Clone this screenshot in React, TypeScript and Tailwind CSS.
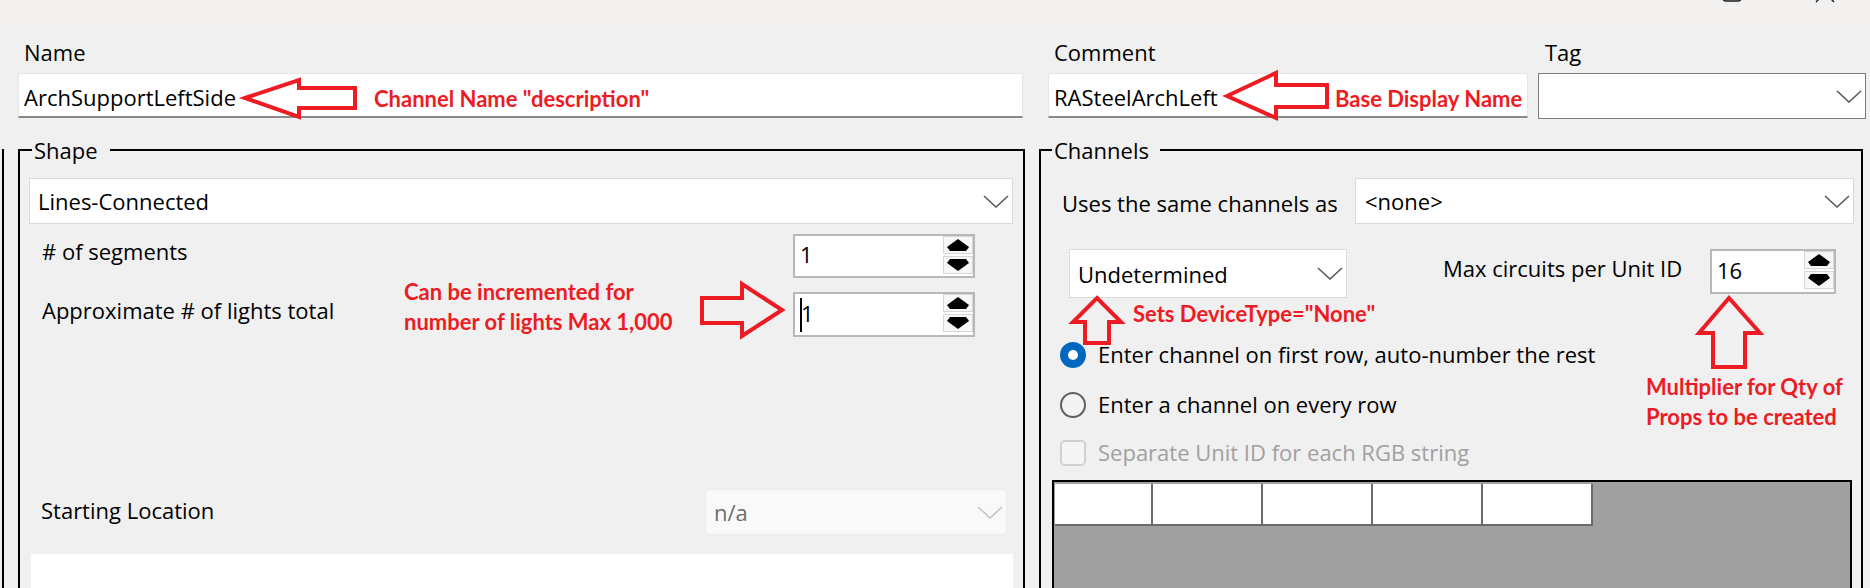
import React from "react";

type Cls = Readonly<{ className?: string }>;

function Chevron({ className }: Cls) {
  return (
    <svg viewBox="0 0 26 13" className={className} fill="none" stroke="currentColor" strokeWidth={1.6}>
      <path d="M1 1 L13 12 L25 1" />
    </svg>
  );
}

function SpinButtons() {
  return (
    <div className="flex flex-col gap-[2px]">
      <div className="w-[30px] h-[18px] border border-[#d6d6d6] bg-[#f7f7f7] flex items-center justify-center">
        <svg width="22" height="12" viewBox="0 0 22 12">
          <polygon points="11,0 22,8 19,12 3,12 0,8" fill="#000" />
        </svg>
      </div>
      <div className="w-[30px] h-[18px] border border-[#d6d6d6] bg-[#f7f7f7] flex items-center justify-center">
        <svg width="22" height="12" viewBox="0 0 22 12">
          <polygon points="3,0 19,0 22,4 11,12 0,4" fill="#000" />
        </svg>
      </div>
    </div>
  );
}

function Spinbox({ value, className, caret }: Cls & { value: string; caret?: boolean }) {
  return (
    <div className={`flex bg-white border-2 border-[#b8b8b8] ${className ?? ""}`}>
      <div className="flex-1 flex items-center pl-[5px]">
        {caret && <span className="w-[2px] h-[34px] bg-black -mr-[1px]" />}
        <span className="pb-[3px]">{value}</span>
      </div>
      <SpinButtons />
    </div>
  );
}

function Select({ value, className, disabled }: Cls & { value: string; disabled?: boolean }) {
  return (
    <div
      className={`flex items-center justify-between pr-[3px] ${
        disabled ? "bg-[#f9f9f9] border border-[#ececec] text-[#6d6d6d]" : "bg-white border border-[#dadada]"
      } ${className ?? ""}`}
    >
      <span className="pt-[1px]">{value}</span>
      <Chevron className={`w-[26px] h-[13px] ${disabled ? "text-[#c6c6c6]" : "text-[#5a5a5a]"}`} />
    </div>
  );
}

function Radio({ checked }: Readonly<{ checked?: boolean }>) {
  return checked ? (
    <span className="w-[26px] h-[26px] rounded-full bg-[#0067c0] flex items-center justify-center">
      <span className="w-[10px] h-[10px] rounded-full bg-white" />
    </span>
  ) : (
    <span className="w-[26px] h-[26px] rounded-full border-2 border-[#5f5f5f] bg-[#f3f3f3]" />
  );
}

const headerCells = [98, 110, 110, 110, 110];

const notes = [
  { text: 'Channel Name "description"', cls: "left-[374px] top-[88px]" },
  { text: "Base Display Name", cls: "left-[1335px] top-[88px]" },
  { text: "Can be incremented for", cls: "left-[404px] top-[281px]" },
  { text: "number of lights Max 1,000", cls: "left-[404px] top-[311px]" },
  { text: 'Sets DeviceType="None"', cls: "left-[1133px] top-[303px]" },
  { text: "Multiplier for Qty of", cls: "left-[1646px] top-[376px]" },
  { text: "Props to be created", cls: "left-[1646px] top-[406px]" },
];

const arrows = [
  "245,98 299,80 299,88 355,88 355,108 299,108 299,117",
  "1227,96 1276,73 1276,85 1327,85 1327,107 1276,107 1276,118",
  "782,310 742,284 742,298 702,298 702,323 742,323 742,336",
  "1097,298 1121,322 1109,322 1109,343 1085,343 1085,322 1073,322",
  "1729,298 1760,333 1745,333 1745,367 1713,367 1713,333 1699,333",
];

export default function App() {
  return (
    <div className="relative w-[1870px] h-[588px] overflow-hidden bg-[#f0f0f0] text-black text-[22px] font-['Open_Sans',sans-serif]">
      {/* title bar, only the bottom of the buttons is in view */}
      <div className="h-[25px] bg-[#f3f1f0] flex justify-end items-end pr-[35px] gap-[73px] overflow-hidden">
        <svg width="20" height="20" viewBox="0 0 20 20" className="mb-[22px]" fill="none" stroke="#1a1a1a" strokeWidth={1.6}>
          <rect x="1" y="1" width="18" height="17" rx="3" />
        </svg>
        <svg width="20" height="20" viewBox="0 0 20 20" className="mb-[22px]" fill="none" stroke="#1a1a1a" strokeWidth={1.4}>
          <path d="M1 1 L19 19 M19 1 L1 19" />
        </svg>
      </div>

      {/* name / comment / tag */}
      <div className="flex pl-[18px] pt-[13px]">
        <div className="w-[1005px] flex flex-col">
          <div className="h-[28px] leading-[28px] pl-[6px]">Name</div>
          <div className="mt-[7px] h-[45px] bg-white border border-[#e6e6e6] border-b-2 border-b-[#8a8a8a] flex items-center pl-[5px] pt-[4px]">
            ArchSupportLeftSide
          </div>
        </div>
        <div className="ml-[25px] w-[480px] flex flex-col">
          <div className="h-[28px] leading-[28px] pl-[6px]">Comment</div>
          <div className="mt-[7px] h-[45px] bg-white border border-[#e6e6e6] border-b-2 border-b-[#8a8a8a] flex items-center pl-[5px] pt-[4px]">
            RASteelArchLeft
          </div>
        </div>
        <div className="ml-[10px] w-[328px] flex flex-col">
          <div className="h-[28px] leading-[28px] pl-[7px]">Tag</div>
          <div className="mt-[7px] h-[46px] bg-white border border-[#7a7a7a] flex items-center justify-end pr-[3px]">
            <Chevron className="w-[26px] h-[13px] text-[#5a5a5a]" />
          </div>
        </div>
      </div>

      {/* group boxes */}
      <div className="flex mt-[17px] h-[453px]">
        <div className="ml-[2px] mt-[13px] w-[2px] bg-black" />

        <fieldset className="ml-[14px] w-[1007px] h-[480px] border-2 border-black min-w-0">
          <legend className="ml-[12px] pl-[2px] pr-[12px] leading-[28px] -mt-[2px]">Shape</legend>
          <Select value="Lines-Connected" className="mt-[14px] ml-[9px] w-[984px] h-[46px] pl-[8px]" />
          <div className="mt-[10px] flex items-start h-[44px]">
            <div className="pl-[22px] mt-[3px] leading-[28px]">
              # of segments
            </div>
            <Spinbox value="1" className="ml-auto mr-[48px] w-[182px] h-[44px]" />
          </div>
          <div className="mt-[14px] flex items-start h-[45px]">
            <div className="pl-[22px] mt-[4px] leading-[28px]">Approximate # of lights total</div>
            <Spinbox value="1" caret className="ml-auto mr-[48px] w-[182px] h-[45px]" />
          </div>
          <div className="mt-[152px] flex items-center h-[46px]">
            <div className="pl-[21px] pb-[5px] leading-[28px]">Starting Location</div>
            <Select value="n/a" disabled className="ml-auto mr-[16px] w-[302px] h-[46px] pl-[8px]" />
          </div>
          <div className="mt-[19px] ml-[11px] w-[982px] h-[80px] bg-white" />
        </fieldset>

        <fieldset className="ml-[14px] w-[824px] h-[480px] border-2 border-black min-w-0">
          <legend className="ml-[11px] pl-[2px] pr-[11px] leading-[28px]">Channels</legend>
          <div className="mt-[14px] flex items-center h-[46px]">
            <div className="pl-[21px] pt-[4px] leading-[28px]">Uses the same channels as</div>
            <Select value="<none>" className="ml-auto mr-[7px] w-[499px] h-[46px] pl-[9px]" />
          </div>
          <div className="mt-[25px] flex items-start h-[49px]">
            <Select value="Undetermined" className="ml-[28px] w-[278px] h-[49px] pl-[8px]" />
            <div className="ml-[96px] mt-[5px] leading-[28px]">Max circuits per Unit ID</div>
            <Spinbox value="16" className="ml-auto mr-[25px] w-[126px] h-[45px]" />
          </div>
          <div className="mt-[43px] h-[28px] flex items-center pl-[19px] gap-[12px]">
            <Radio checked />
            <span className="pb-[1px]">Enter channel on first row, auto-number the rest</span>
          </div>
          <div className="mt-[22px] h-[28px] flex items-center pl-[19px] gap-[12px]">
            <Radio />
            <span className="pb-[1px]">Enter a channel on every row</span>
          </div>
          <div className="mt-[20px] h-[28px] flex items-center pl-[19px] gap-[12px]">
            <span className="w-[26px] h-[26px] rounded-[5px] border-2 border-[#d0d0d0] bg-[#f5f5f5]" />
            <span className="pb-[1px] text-[#a0a0a0]">Separate Unit ID for each RGB string</span>
          </div>
          <div className="mt-[13px] ml-[11px] w-[800px] h-[200px] border-2 border-black bg-[#a0a0a0] pl-[1px] pt-[2px]">
            <div className="flex">
              {headerCells.map((w, i) => (
                <div
                  key={i}
                  className={`h-[42px] bg-white border-b-2 border-r-2 border-[#6b6b6b] ${
                    w === 98 ? "w-[98px]" : "w-[110px]"
                  }`}
                />
              ))}
            </div>
          </div>
        </fieldset>
      </div>

      {/* red annotations */}
      <svg className="absolute inset-0 w-[1870px] h-[588px] pointer-events-none" viewBox="0 0 1870 588">
        {arrows.map((p, i) => (
          <polygon key={i} points={p} fill="none" stroke="#ed1c24" strokeWidth={4} />
        ))}
      </svg>
      {notes.map((n) => (
        <div
          key={n.text}
          className={`absolute whitespace-nowrap leading-none text-[22px] font-bold text-[#ed1c24] font-['Lato',sans-serif] ${n.cls}`}
        >
          {n.text}
        </div>
      ))}
    </div>
  );
}
